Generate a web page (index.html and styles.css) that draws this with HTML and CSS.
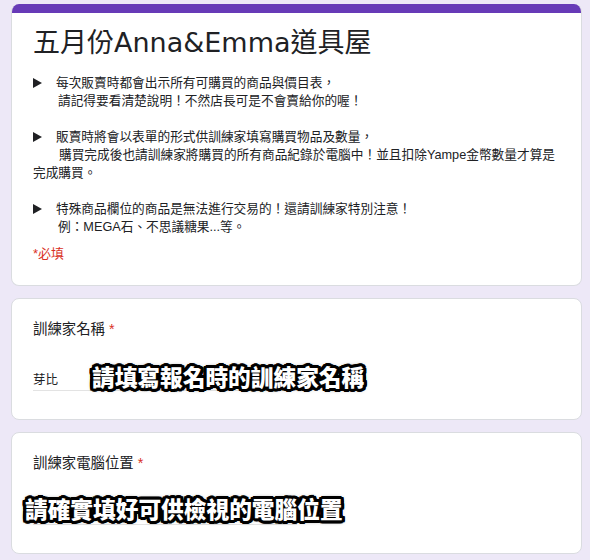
FILE: index.html
```
<!DOCTYPE html>
<html lang="zh-Hant">
<head>
<meta charset="utf-8">
<title>五月份Anna&amp;Emma道具屋</title>
<link rel="stylesheet" href="styles.css">
</head>
<body>
<main class="form">
  <section class="card header-card">
    <div class="bar"></div>
    <div class="header-body">
      <h1 class="title">五月份Anna&amp;Emma道具屋</h1>
      <div class="desc">
        <div class="item">
          <div class="first"><span class="tri"></span><span>每次販賣時都會出示所有可購買的商品與價目表，</span></div>
          <div class="cont">請記得要看清楚說明！不然店長可是不會賣給你的喔！</div>
        </div>
        <div class="blank"></div>
        <div class="item">
          <div class="first"><span class="tri"></span><span>販賣時將會以表單的形式供訓練家填寫購買物品及數量，</span></div>
          <div class="cont wrap">購買完成後也請訓練家將購買的所有商品紀錄於電腦中！並且扣除Yampe金幣數量才算是完成購買。</div>
        </div>
        <div class="blank"></div>
        <div class="item">
          <div class="first"><span class="tri"></span><span>特殊商品欄位的商品是無法進行交易的！還請訓練家特別注意！</span></div>
          <div class="cont">例：MEGA石、不思議糖果...等。</div>
        </div>
      </div>
      <div class="required-note">*必填</div>
    </div>
  </section>

  <section class="card question">
    <div class="label">訓練家名稱 <span class="star">*</span></div>
    <div class="input">芽比</div>
    <div class="overlay overlay-name">請填寫報名時的訓練家名稱</div>
  </section>

  <section class="card question">
    <div class="label">訓練家電腦位置 <span class="star">*</span></div>
    <div class="input"></div>
    <div class="overlay overlay-pc">請確實填好可供檢視的電腦位置</div>
  </section>
</main>
</body>
</html>
```
FILE: styles.css
```
html, body {
  margin: 0;
  padding: 0;
}
body {
  background: #ede8f7;
  font-family: "Liberation Sans", "Noto Sans CJK TC", sans-serif;
  color: #202124;
  padding: 4px 8px 0 11px;
}
.form {
  display: flex;
  flex-direction: column;
  gap: 12px;
  width: 571px;
}
.card {
  position: relative;
  background: #ffffff;
  border: 1px solid #dadce0;
  border-radius: 8px;
  overflow: hidden;
}
.header-card {
  border-top: none;
}
.bar {
  height: 9px;
  background: #673ab7;
}
.header-body {
  padding: 12px 21px 22px 21px;
}
.title {
  margin: 0;
  font-family: "DejaVu Sans", "Noto Sans CJK TC", sans-serif;
  font-weight: 400;
  font-size: 27px;
  line-height: 36px;
  color: #202124;
}
.desc {
  margin-top: 13px;
  font-size: 12.7px;
  line-height: 18px;
}
.blank {
  height: 18px;
}
.first {
  display: flex;
  align-items: center;
}
.tri {
  display: inline-block;
  width: 0;
  height: 0;
  border-top: 5px solid transparent;
  border-bottom: 5px solid transparent;
  border-left: 9px solid #202124;
  margin-right: 14px;
}
.cont {
  padding-left: 25px;
}
.cont.wrap {
  padding-left: 0;
  text-indent: 26px;
}
.required-note {
  margin-top: 9px;
  font-size: 13px;
  line-height: 18px;
  color: #d93025;
}
.question {
  padding: 20px 21px 28px 21px;
}
.label {
  font-size: 14.4px;
  line-height: 20px;
  color: #202124;
}
.star {
  color: #d93025;
}
.input {
  margin-top: 31px;
  width: 264px;
  height: 20px;
  font-size: 12.5px;
  line-height: 20px;
  border-bottom: 1px solid #e3e3e3;
}
.overlay {
  position: absolute;
  font-family: "Noto Sans CJK TC", sans-serif;
  font-weight: 900;
  font-size: 22.7px;
  line-height: 28px;
  color: #ffffff;
  white-space: nowrap;
  text-shadow:
    3px 0 0 #000, -3px 0 0 #000, 0 3px 0 #000, 0 -3px 0 #000,
    2px 2px 0 #000, -2px -2px 0 #000, 2px -2px 0 #000, -2px 2px 0 #000,
    3px 1px 0 #000, -3px 1px 0 #000, 3px -1px 0 #000, -3px -1px 0 #000,
    1px 3px 0 #000, -1px 3px 0 #000, 1px -3px 0 #000, -1px -3px 0 #000,
    3px 2px 0 #000, -3px 2px 0 #000, 3px -2px 0 #000, -3px -2px 0 #000,
    0 0 5px #000;
}
.overlay-name {
  left: 80px;
  top: 64px;
}
.overlay-pc {
  left: 13px;
  top: 62px;
}
```
